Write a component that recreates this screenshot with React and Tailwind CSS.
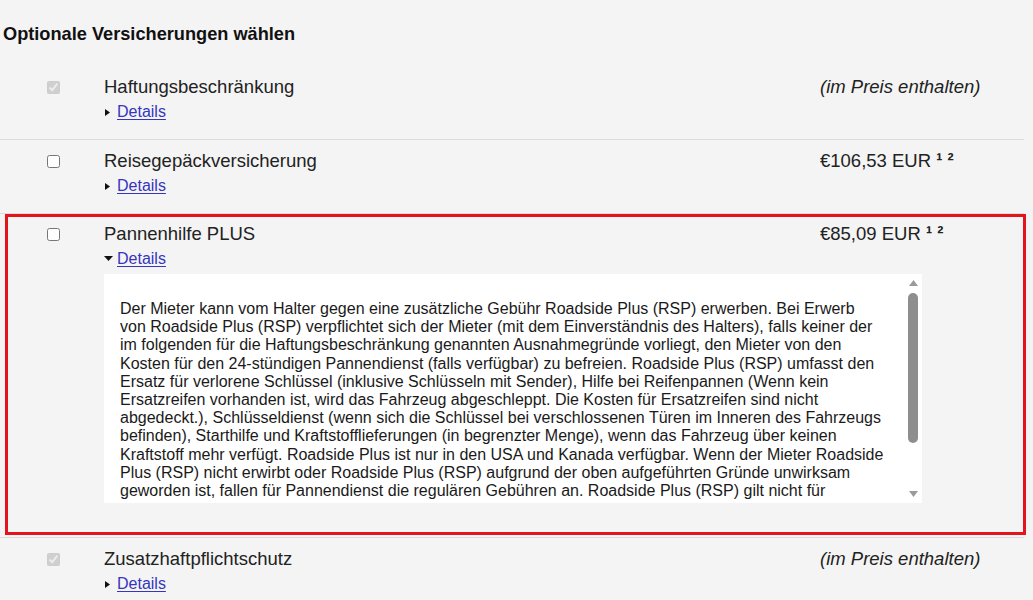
import React from 'react';

const RSP_ZEILEN = [
  'Der Mieter kann vom Halter gegen eine zusätzliche Gebühr Roadside Plus (RSP) erwerben. Bei Erwerb',
  'von Roadside Plus (RSP) verpflichtet sich der Mieter (mit dem Einverständnis des Halters), falls keiner der',
  'im folgenden für die Haftungsbeschränkung genannten Ausnahmegründe vorliegt, den Mieter von den',
  'Kosten für den 24-stündigen Pannendienst (falls verfügbar) zu befreien. Roadside Plus (RSP) umfasst den',
  'Ersatz für verlorene Schlüssel (inklusive Schlüsseln mit Sender), Hilfe bei Reifenpannen (Wenn kein',
  'Ersatzreifen vorhanden ist, wird das Fahrzeug abgeschleppt. Die Kosten für Ersatzreifen sind nicht',
  'abgedeckt.), Schlüsseldienst (wenn sich die Schlüssel bei verschlossenen Türen im Inneren des Fahrzeugs',
  'befinden), Starthilfe und Kraftstofflieferungen (in begrenzter Menge), wenn das Fahrzeug über keinen',
  'Kraftstoff mehr verfügt. Roadside Plus ist nur in den USA und Kanada verfügbar. Wenn der Mieter Roadside',
  'Plus (RSP) nicht erwirbt oder Roadside Plus (RSP) aufgrund der oben aufgeführten Gründe unwirksam',
  'geworden ist, fallen für Pannendienst die regulären Gebühren an. Roadside Plus (RSP) gilt nicht für',
];

const VERSICHERUNGEN = [
  { titel: 'Haftungsbeschränkung', preis: null, inklusive: true },
  { titel: 'Reisegepäckversicherung', preis: '€106,53 EUR', inklusive: false },
  { titel: 'Pannenhilfe PLUS', preis: '€85,09 EUR', inklusive: false, offen: true },
  { titel: 'Zusatzhaftpflichtschutz', preis: null, inklusive: true },
];

function Pfeil({ offen }) {
  return offen ? (
    <svg width="9" height="6" viewBox="0 0 9 6" className="mr-[4px]">
      <path d="M0 0h9L4.5 5z" fill="#111" />
    </svg>
  ) : (
    <svg width="6" height="9" viewBox="0 0 6 9" className="ml-[1px] mr-[6px]">
      <path d="M0 1l5 3.5L0 8z" fill="#111" />
    </svg>
  );
}

function Kopfzeile({ v, links }) {
  return (
    <div className="flex">
      <div className="flex h-[22px] items-center" style={{ width: links }}>
        <input
          type="checkbox"
          checked={v.inklusive}
          disabled={v.inklusive}
          readOnly
          className="ml-auto mr-[44px] h-[13px] w-[13px]"
        />
      </div>
      <div className="w-[716px]">
        <div className="h-[22px] text-[18.5px] leading-[22px] text-[#222]">{v.titel}</div>
        <div className="mt-[3px] flex h-[22px] items-center text-[16px]">
          <Pfeil offen={v.offen} />
          <a href="#" className="text-[#3535c0] underline underline-offset-2">Details</a>
        </div>
      </div>
      <div className="h-[22px] text-[18.5px] leading-[22px] text-[#222]">
        {v.inklusive ? (
          <span className="italic">(im Preis enthalten)</span>
        ) : (
          <span>
            {v.preis} <span className="font-bold">¹ ²</span>
          </span>
        )}
      </div>
    </div>
  );
}

function Scrollleiste() {
  return (
    <div className="flex w-[16px] flex-col items-center pr-[2px] pt-[6px] pb-[6px]">
      <svg width="9" height="6" viewBox="0 0 9 6">
        <path d="M4.5 0L9 6H0z" fill="#9a9a9a" />
      </svg>
      <div className="mt-[7px] h-[150px] w-[10px] rounded-full bg-[#8e8e8e]" />
      <div className="flex-1" />
      <svg width="9" height="6" viewBox="0 0 9 6">
        <path d="M0 0h9L4.5 6z" fill="#9a9a9a" />
      </svg>
    </div>
  );
}

export default function App() {
  return (
    <div className="min-h-screen bg-[#f4f4f4] font-['Liberation_Sans',Arial,sans-serif] text-[#222]">
      <div className="w-[1024px]">
        <h2 className="pl-[3px] pt-[23px] text-[18.2px] font-bold leading-[22px] text-[#111]">
          Optionale Versicherungen wählen
        </h2>

        <div className="mt-[21px]">
          {VERSICHERUNGEN.map((v, i) =>
            v.offen ? (
              <div key={i} className="border-b border-[#dcdcdc]">
                <div className="mb-[2px] ml-[5px] w-[1021px] border-[3px] border-[#e3141b] pt-[6px] pb-[29px]">
                  <Kopfzeile v={v} links={96} />
                  <div className="ml-[96px] mt-[4px] flex h-[229px] w-[818px] bg-white">
                    <div className="flex-1 overflow-hidden whitespace-nowrap pl-[16px] pt-[26px] text-[16px] leading-[18.2px] text-[#1a1a1a]">
                      {RSP_ZEILEN.map((z, j) => (
                        <div key={j}>{z}</div>
                      ))}
                    </div>
                    <Scrollleiste />
                  </div>
                </div>
              </div>
            ) : (
              <div
                key={i}
                className={`pt-[10px] pb-[16px] ${i < VERSICHERUNGEN.length - 1 ? 'border-b border-[#dcdcdc]' : ''}`}
              >
                <Kopfzeile v={v} links={104} />
              </div>
            )
          )}
        </div>
      </div>
    </div>
  );
}
